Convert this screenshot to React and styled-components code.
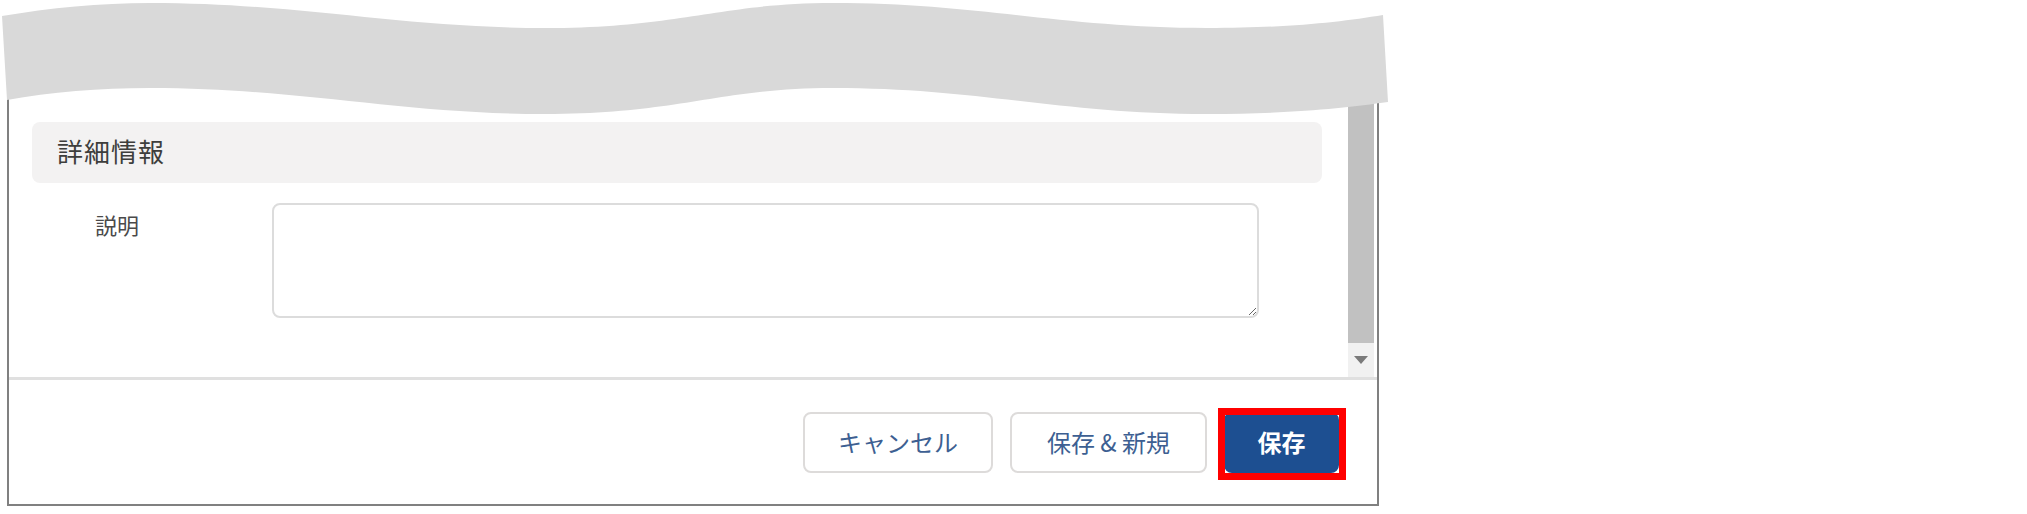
import React from "react";
import styled, { createGlobalStyle } from "styled-components";

const GlobalStyle = createGlobalStyle`
  html, body {
    margin: 0;
    padding: 0;
    background: #fff;
  }
  body {
    font-family: "Noto Sans CJK JP", "Noto Sans", sans-serif;
  }
`;

const App = () => {
  return (
    <Page>
      <GlobalStyle />
      <Dialog>
        <ScrollArea>
          <Content>
            <SectionHeader>詳細情報</SectionHeader>
            <FieldRow>
              <FieldLabel htmlFor="desc">説明</FieldLabel>
              <TextArea id="desc" />
            </FieldRow>
          </Content>
          <Scrollbar>
            <Thumb />
            <ArrowButton>
              <Triangle />
            </ArrowButton>
          </Scrollbar>
        </ScrollArea>
        <Footer>
          <Button $width={190}>キャンセル</Button>
          <Button $width={197}>保存 &amp; 新規</Button>
          <Highlight>
            <Button $width={115} $primary>保存</Button>
          </Highlight>
        </Footer>
      </Dialog>

      {/* 省略を示す波形 */}
      <Wave viewBox="0 0 1390 116" width="1390" height="116">
        <path
          d="M2,16 C50,8 100,3 150,3 C300,3 400,28 545,28 C680,28 720,3 833,3 C980,3 1060,28 1207,28 C1290,28 1340,22 1383,15 L1388,102 C1345,108 1290,114 1207,114 C1060,114 980,88 833,88 C720,88 680,114 545,114 C400,114 300,88 150,88 C100,88 50,92 7,100 Z"
          fill="#d9d9d9"
        />
      </Wave>
    </Page>
  );
};

export default App;

const Page = styled.div`
  position: relative;
  width: 2027px;
  height: 514px;
  padding-top: 20px;
  box-sizing: border-box;
  overflow: hidden;
`;

const Dialog = styled.div`
  display: flex;
  flex-direction: column;
  margin-left: 7px;
  width: 1372px;
  height: 486px;
  box-sizing: border-box;
  border: 2px solid #808080;
  border-top: none;
  background: #fff;
`;

const ScrollArea = styled.div`
  display: flex;
  height: 360px;
  box-sizing: border-box;
  border-bottom: 3px solid #e0e0e0;
`;

const Content = styled.div`
  flex: 1;
  padding: 102px 26px 0 23px;
`;

const SectionHeader = styled.div`
  display: flex;
  align-items: center;
  height: 61px;
  box-sizing: border-box;
  padding: 0 0 4px 25px;
  border-radius: 8px;
  background: #f3f2f2;
  color: #3e3e3c;
  font-size: 26px;
  letter-spacing: 1px;
`;

const FieldRow = styled.div`
  display: flex;
  margin: 20px 63px 0;
`;

const FieldLabel = styled.label`
  width: 177px;
  flex-shrink: 0;
  padding-top: 7px;
  line-height: 28px;
  font-size: 22px;
  color: #4a4a4a;
`;

const TextArea = styled.textarea`
  flex: 1;
  height: 115px;
  box-sizing: border-box;
  border: 2px solid #dcdcdc;
  border-radius: 8px;
  resize: vertical;
  outline: none;
`;

const Scrollbar = styled.div`
  display: flex;
  flex-direction: column;
  width: 26px;
  margin-right: 3px;
`;

const Thumb = styled.div`
  flex: 1;
  background: #c1c1c1;
`;

const ArrowButton = styled.div`
  display: flex;
  align-items: center;
  justify-content: center;
  height: 34px;
  background: #f1f1f1;
`;

const Triangle = styled.div`
  width: 0;
  height: 0;
  border-left: 7px solid transparent;
  border-right: 7px solid transparent;
  border-top: 8px solid #7a7a7a;
`;

const Footer = styled.div`
  flex: 1;
  display: flex;
  justify-content: flex-end;
  align-items: flex-start;
  gap: 17px;
  padding: 32px 38px 0 0;
`;

const Button = styled.button`
  width: ${(p) => p.$width}px;
  height: 61px;
  box-sizing: border-box;
  border: 2px solid ${(p) => (p.$primary ? "#1d4f91" : "#dddbda")};
  border-radius: 8px;
  background: ${(p) => (p.$primary ? "#1d4f91" : "#fff")};
  color: ${(p) => (p.$primary ? "#fff" : "#3d5f92")};
  font-family: "Noto Sans CJK JP", "Noto Sans", sans-serif;
  font-size: 24px;
  font-weight: ${(p) => (p.$primary ? 700 : 400)};
  padding: 0 0 3px;
`;

const Highlight = styled.div`
  position: relative;
  display: flex;

  &::after {
    content: "";
    position: absolute;
    top: -4px;
    left: -6px;
    right: -7px;
    bottom: -7px;
    border: 7px solid #ff0000;
    pointer-events: none;
  }
`;

const Wave = styled.svg`
  position: absolute;
  top: 0;
  left: 0;
  display: block;
`;
